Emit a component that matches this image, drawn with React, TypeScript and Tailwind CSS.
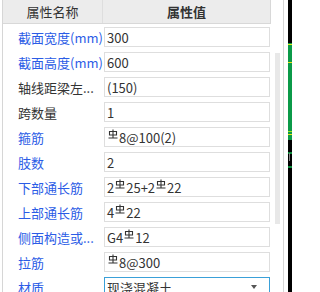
import React from "react";

type Row = {
  label: string;
  value: string;
  link?: boolean;
};

// § marks where the grade-III rebar symbol goes
const rows: Row[] = [
  { label: "截面宽度(mm)", value: "300", link: true },
  { label: "截面高度(mm)", value: "600", link: true },
  { label: "轴线距梁左...", value: "(150)" },
  { label: "跨数量", value: "1" },
  { label: "箍筋", value: "§8@100(2)", link: true },
  { label: "肢数", value: "2", link: true },
  { label: "下部通长筋", value: "2§25+2§22", link: true },
  { label: "上部通长筋", value: "4§22", link: true },
  { label: "侧面构造或...", value: "G4§12", link: true },
  { label: "拉筋", value: "§8@300", link: true },
];

const Rebar = () => (
  <svg
    width="10"
    height="10"
    viewBox="0 0 10 10"
    className="mx-[1px] -translate-y-[3px] shrink-0"
  >
    <path
      d="M5 0.5V9M1.5 2.5H8.5V6H1.5ZM0.5 9H9.5"
      fill="none"
      stroke="#333"
      strokeWidth="1.1"
    />
  </svg>
);

const Value = ({ text }: { text: string }) => {
  const parts = text.split("§");
  return (
    <span className="flex items-center">
      {parts.map((p, i) => (
        <React.Fragment key={i}>
          {i > 0 && <Rebar />}
          <span>{p}</span>
        </React.Fragment>
      ))}
    </span>
  );
};

// strip of the drawing canvas at the right edge
const CanvasStrip = () => (
  <svg width="4" height="292" className="shrink-0 block">
    <rect x="0" y="0" width="4" height="292" fill="#000" />
    <rect x="0" y="43" width="4" height="97" fill="#0b9a48" />
    <rect x="0" y="44" width="4" height="1" fill="#e6e619" />
    <rect x="0" y="62" width="4" height="1" fill="#e6e619" />
    <rect x="0" y="131" width="4" height="1" fill="#9be61f" />
    <rect x="0" y="134" width="4" height="1" fill="#e6e619" />
    <rect x="0" y="152" width="4" height="2" fill="#0b8a3a" />
    <rect x="1" y="153" width="1" height="8" fill="#888" />
    <rect x="0" y="166" width="4" height="2" fill="#0b8a3a" />
  </svg>
);

const App = () => {
  return (
    <div
      className="w-[292px] h-[292px] overflow-hidden bg-white flex text-[13px] text-[#333]"
      style={{ fontFamily: '"Noto Sans CJK SC", "Noto Sans", sans-serif' }}
    >
      <div className="w-[2px] shrink-0" />
      <div className="flex border-l border-r border-[#d6d6d6] h-full shrink-0">
        <div className="w-[268px] flex flex-col">
          <div className="h-[24px] flex bg-[#ececec] border-b border-r border-[#d8d8d8] shrink-0">
            <div className="w-[100px] border-r border-[#dedede] flex items-center justify-center">
              属性名称
            </div>
            <div className="flex-1 flex items-center justify-center font-semibold">
              属性值
            </div>
          </div>
          <div className="flex flex-col gap-[5px] pt-[3px]">
            {rows.map((r) => (
              <div key={r.label} className="h-[20px] flex items-center shrink-0">
                <div
                  className={`w-[101px] pl-[15px] whitespace-nowrap leading-none ${
                    r.link ? "text-[#2b5ce6]" : "text-[#333]"
                  }`}
                >
                  {r.label}
                </div>
                <div className="flex-1 mr-[1px] h-full border border-[#dedede] flex items-center pl-[2px] leading-none">
                  <Value text={r.value} />
                </div>
              </div>
            ))}
            <div className="h-[20px] flex items-center shrink-0">
              <div className="w-[101px] pl-[15px] text-[#2b5ce6] leading-none">
                材质
              </div>
              <div className="flex-1 mr-[1px] h-full border border-[#3aa0d8] flex items-center justify-between pl-[2px] pr-[12px] leading-none">
                <span>现浇混凝土</span>
                <span className="w-0 h-0 border-l-[3px] border-r-[3px] border-t-[4px] border-l-transparent border-r-transparent border-t-[#555]" />
              </div>
            </div>
          </div>
        </div>
        <div className="w-[12px] shrink-0">
          <div className="ml-[4px] w-[5px] mt-[53px] h-[171px] bg-[#e8e8e8]" />
        </div>
      </div>
      <div className="w-[4px] shrink-0" />
      <CanvasStrip />
    </div>
  );
};

export default App;
